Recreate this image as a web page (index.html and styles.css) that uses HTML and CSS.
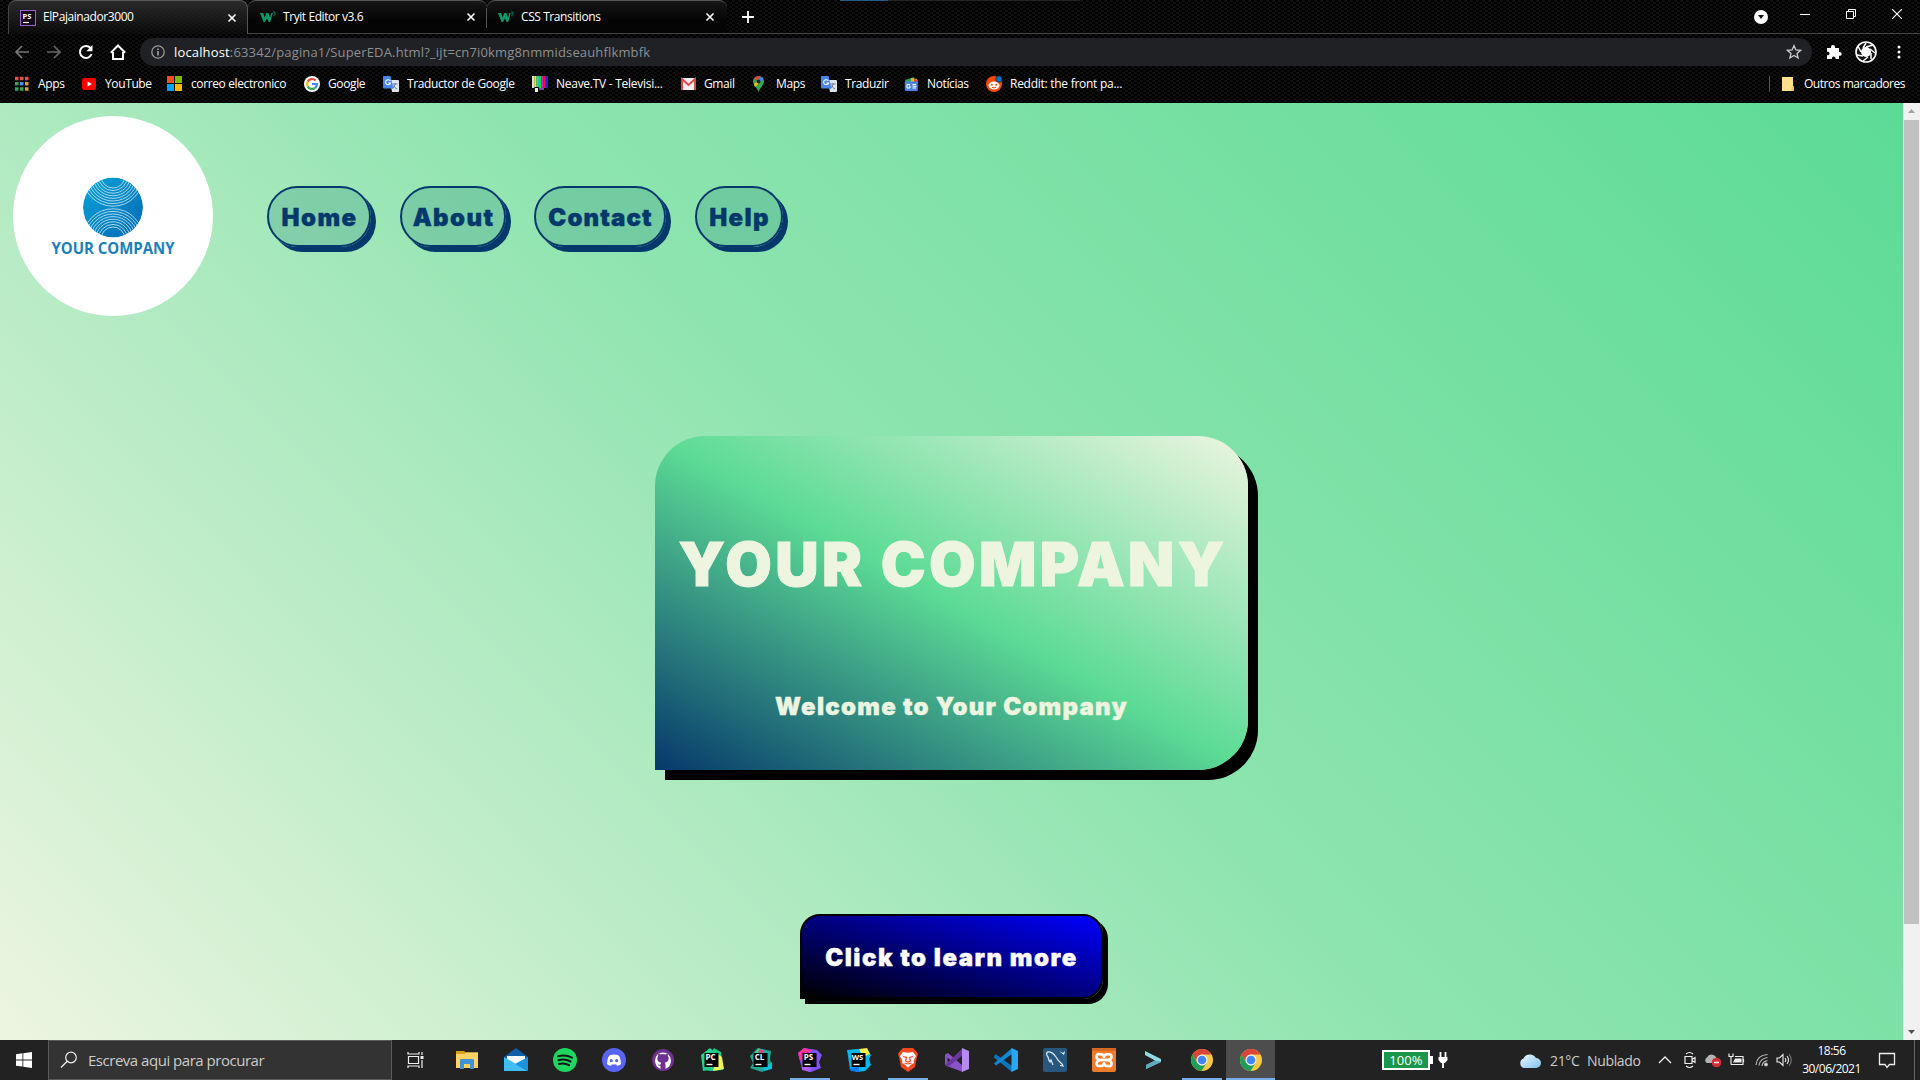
FILE: index.html
```html
<!DOCTYPE html>
<html lang="pt">
<head>
<meta charset="utf-8">
<title>ElPajainador3000</title>
<link rel="stylesheet" href="styles.css">
</head>
<body>
<svg width="0" height="0" class="defs">
  <defs>
    <linearGradient id="emblem" x1="0" y1="0" x2="1" y2="1"><stop offset="0" stop-color="#0aa5d8"/><stop offset="1" stop-color="#0568b4"/></linearGradient>
    <linearGradient id="cloudfill" x1="0" y1="0" x2="1" y2="1"><stop offset="0" stop-color="#eef8ff"/><stop offset="1" stop-color="#7fc0ee"/></linearGradient>
  </defs>
  <symbol id="close" viewBox="0 0 10 10"><path d="M1.500 1.500l7 7M8.500 1.500l-7 7" stroke="#fff" stroke-width="1.600"/></symbol>
  <symbol id="w3" viewBox="0 0 16 16"><path d="M0 4h3l1.700 4.500L6.300 4h2l1.700 4.500L11.300 4h1.500l-2.600 9H8.700L7 9.500 5 13H3.600z" fill="#0a9b6b"/><path d="M13 3h2.300l-1.300 1.700q1.700 0 1.300 1.400-.5 1-2.100.5" fill="none" stroke="#0b7a57" stroke-width=".9"/></symbol>
  <symbol id="trans" viewBox="0 0 16 16"><path d="M7 4h8q1 0 1 1v10q0 1-1 1H9z" fill="#dfe3ea"/><path d="M9.500 8h5M12 7v1.500q-.5 3-3 4M10.500 9.500q1 2.500 3.500 3.500" stroke="#6b7c93" fill="none"/><path d="M1 0h6.500l3 12.500H1q-1 0-1-1V1q0-1 1-1z" fill="#4a86ea"/><path d="M7.300 5A2.500 2.500 0 1 0 7.500 7H5.300" fill="none" stroke="#fff" stroke-width="1.100"/></symbol>
  <symbol id="chrome" viewBox="0 0 48 48"><circle cx="24" cy="24" r="22" fill="#f7c844"/><path d="M5 13A22 22 0 0 1 43 13H24a11 11 0 0 0-9.500 16z" fill="#db4437"/><path d="M5 13l9.500 16.500L24 35l9.500-5.500L23 46A22 22 0 0 1 5 13z" fill="#1e9d58"/><circle cx="24" cy="24" r="11" fill="#f3f3f3"/><circle cx="24" cy="24" r="8.700" fill="#4285f4"/></symbol>
</svg>

<header class="browser">
  <div class="tabs">
    <div class="tab active">
      <svg class="i16" viewBox="0 0 16 16"><rect x=".5" y=".5" width="15" height="15" fill="#130c1c" stroke="#9b5fd0"/><text x="2.500" y="8.500" font-size="7.500" class="jb">PS</text><path d="M3 12.500h6" stroke="#fff" stroke-width="1.200"/></svg>
      <span class="title">ElPajainador3000</span><svg class="x"><use href="#close"/></svg>
    </div>
    <div class="tab second"><svg class="i16"><use href="#w3"/></svg><span class="title">Tryit Editor v3.6</span><svg class="x"><use href="#close"/></svg></div>
    <div class="tab third"><svg class="i16"><use href="#w3"/></svg><span class="title">CSS Transitions</span><svg class="x"><use href="#close"/></svg></div>
    <svg class="plus" viewBox="0 0 12 12"><path d="M6 0v12M0 6h12" stroke="#fff" stroke-width="1.800"/></svg>
    <div class="winctl">
      <svg width="14" height="16" viewBox="0 0 14 16"><ellipse cx="7" cy="9" rx="7" ry="7" fill="#fff"/><path d="M4 7h6l-3 4z" fill="#111"/></svg>
      <svg width="10" height="10" viewBox="0 0 10 10"><path d="M0 5.500h10" stroke="#fff"/></svg>
      <svg width="10" height="10" viewBox="0 0 10 10"><path d="M.5 2.500h7v7h-7zM2.500 2.500v-2h7v7h-2" fill="none" stroke="#fff"/></svg>
      <svg width="10" height="10" viewBox="0 0 10 10"><path d="M0 0l10 10M10 0L0 10" stroke="#fff" stroke-width="1.100"/></svg>
    </div>
  </div>
  <div class="toolbar">
    <svg class="nav" viewBox="0 0 16 16"><path d="M15 8H2M8 2L2 8l6 6" fill="none" stroke="#777" stroke-width="1.700"/></svg>
    <svg class="nav" viewBox="0 0 16 16"><path d="M1 8h13M8 2l6 6-6 6" fill="none" stroke="#666" stroke-width="1.700"/></svg>
    <svg class="nav" viewBox="0 0 16 16"><path d="M13.600 10A6 6 0 1 1 12.500 4" fill="none" stroke="#fff" stroke-width="2"/><path d="M14.500 1v6.200H8.300z" fill="#fff"/></svg>
    <svg class="nav" viewBox="0 0 16 16"><path d="M3 8v7h10V8M.8 8.700L8 1.500l7.200 7.200" fill="none" stroke="#fff" stroke-width="2"/></svg>
    <div class="omnibox">
      <svg width="14" height="14" viewBox="0 0 14 14"><circle cx="7" cy="7" r="6.200" fill="none" stroke="#999" stroke-width="1.300"/><path d="M7 6v4.500M7 3.500V5" stroke="#aaa" stroke-width="1.500"/></svg>
      <span class="url"><b>localhost</b>:63342/pagina1/SuperEDA.html?_ijt=cn7i0kmg8nmmidseauhflkmbfk</span>
      <svg class="star" viewBox="0 0 16 16"><path d="M8 1.600l1.900 4.300 4.700.4-3.600 3.100 1.100 4.600L8 11.500 3.900 14 5 9.400 1.400 6.300l4.700-.4z" fill="none" stroke="#ccc" stroke-width="1.300"/></svg>
    </div>
    <svg class="puzzle" viewBox="0 0 16 16"><path d="M1 4h4V3a2 2 0 0 1 4 0v1h4v4h.8a1.900 1.900 0 0 1 0 3.800H13V15H9.500v-.8a1.800 1.800 0 0 0-3.600 0v.8H1v-3.800h.8a1.700 1.700 0 0 0 0-3.400H1z" fill="#fff"/></svg>
    <svg class="avatar" viewBox="0 0 22 22"><circle cx="11" cy="11" r="10" fill="#111" stroke="#fff" stroke-width="1.600"/><circle cx="11" cy="11" r="5" fill="#fff"/><path d="M11 6l7-2M15 8l5 4M16 12l0 6M13 16l-5 4M8 15l-6-1M6 11L3 5M8 7l3-5" stroke="#fff" stroke-width="1.500"/></svg>
    <svg class="dots" viewBox="0 0 4 16"><circle cx="2" cy="3" r="1.500" fill="#fff"/><circle cx="2" cy="8" r="1.500" fill="#fff"/><circle cx="2" cy="13" r="1.500" fill="#fff"/></svg>
  </div>
  <div class="bookmarks">
    <div class="bm"><svg class="i16" viewBox="0 0 16 16"><path d="M0 2.500h3.500M5 2.500h3.500M10 2.500h3.500" stroke="#e0524a" stroke-width="3.500"/><path d="M0 7.700h3.500" stroke="#38a35c" stroke-width="3.500"/><path d="M5 7.700h3.500" stroke="#4b8ef0" stroke-width="3.500"/><path d="M10 7.700h3.500" stroke="#d9a636" stroke-width="3.500"/><path d="M0 13h3.500M5 13h3.500" stroke="#38a35c" stroke-width="3.500"/><path d="M10 13h3.500" stroke="#d9a636" stroke-width="3.500"/></svg><span>Apps</span></div>
    <div class="bm tight"><svg class="i16" viewBox="0 0 16 16"><rect y="2" width="14" height="12" rx="2.500" fill="#f00"/><path d="M5.500 5.500v5L10 8z" fill="#fff"/></svg><span>YouTube</span></div>
    <div class="bm"><svg class="i16" viewBox="0 0 16 16"><path fill="#f25022" d="M0 0h7v7H0z"/><path fill="#7fba00" d="M8 0h7v7H8z"/><path fill="#00a4ef" d="M0 8h7v7H0z"/><path fill="#ffb900" d="M8 8h7v7H8z"/></svg><span>correo electronico</span></div>
    <div class="bm"><svg class="i16" viewBox="0 0 16 16"><circle cx="8" cy="8" r="8" fill="#fff"/><g fill="none" stroke-width="2.200"><path d="M11.500 4.500A4.900 4.900 0 0 0 3.700 5.500" stroke="#ea4335"/><path d="M3.700 5.500a5 5 0 0 0 0 5" stroke="#fbbc05"/><path d="M3.700 10.500A5 5 0 0 0 11 12" stroke="#34a853"/><path d="M11 12q2-1.500 1.900-4H8" stroke="#4285f4"/></g></svg><span>Google</span></div>
    <div class="bm"><svg class="i16"><use href="#trans"/></svg><span>Traductor de Google</span></div>
    <div class="bm wide"><svg class="i16" viewBox="0 0 16 16"><path fill="#ddd" d="M0 0h2.300v12H0z"/><path fill="#eded19" d="M2.300 0h2.300v11H2.300z"/><path fill="#13dede" d="M4.600 0h2.300v11H4.600z"/><path fill="#17df25" d="M6.900 0h2.300v12H6.900z"/><path fill="#e51be0" d="M9.200 0h2.300v12H9.200z"/><path fill="#ec1835" d="M11.500 0h2.300v12h-2.300z"/><path fill="#1c25e5" d="M13.800 0H16v12h-2.200z"/><path fill="#eee" d="M3 12h3v4H3z"/><path fill="#734bb0" d="M7 12h5v2H7z"/></svg><span>Neave.TV - Televisi...</span></div>
    <div class="bm tight"><svg class="i16" viewBox="0 0 16 16"><path d="M0 2h15v12H0z" fill="#f4eeee"/><path d="M1 14V3l6.500 6L14 3v11" fill="none" stroke="#d54b45" stroke-width="2"/></svg><span>Gmail</span></div>
    <div class="bm tight"><svg class="i16" viewBox="0 0 16 16"><path d="M5.500 0A5.500 5.500 0 0 1 11 5.500Q11 8 8 11.500 6.500 13.500 5.500 16 4.500 13 3 11.500 0 8 0 5.500A5.500 5.500 0 0 1 5.500 0z" fill="#34a853"/><path d="M5.500 0A5.500 5.500 0 0 0 1 2.500l2.500 2L8 .6z" fill="#ea4335"/><path d="M8 .6L3 7l5-2 2.500-2.500z" fill="#4285f4"/><path d="M.8 8.500L5 4l1 3-4 4z" fill="#fbbc04"/><circle cx="5.500" cy="5.500" r="2" fill="#16202c"/></svg><span>Maps</span></div>
    <div class="bm"><svg class="i16"><use href="#trans"/></svg><span>Traduzir</span></div>
    <div class="bm tight"><svg class="i16" viewBox="0 0 16 16"><path d="M1 4l9-3 1 5H1z" fill="#2d9f5b"/><path d="M7 2l6 1v4H7z" fill="#eab429"/><path d="M10 3l4 1v4h-4z" fill="#d9453d"/><rect x=".8" y="5.500" width="13" height="9.500" rx="1" fill="#4b83df"/><path d="M6 8.500H3v3.500h3v-2H5M8.500 8.500h3.500M8.500 10.300h4M8.500 12h3.500" fill="none" stroke="#fff"/></svg><span>Notícias</span></div>
    <div class="bm wide"><svg class="i16" viewBox="0 0 16 16"><circle cx="8" cy="8" r="8" fill="#ff4500"/><ellipse cx="8" cy="9.500" rx="5.500" ry="4" fill="#fff"/><circle cx="5.800" cy="8.700" r="1" fill="#ff4500"/><circle cx="10.200" cy="8.700" r="1" fill="#ff4500"/><path d="M6 11.300q2 1 4 0" stroke="#ff4500" fill="none"/><circle cx="13" cy="3" r="3.200" fill="#0872c4" stroke="#111" stroke-width=".6"/></svg><span>Reddit: the front pa...</span></div>
    <div class="bm others"><svg class="i16" viewBox="0 0 16 16"><path d="M0 1h11v9l1 1v4H0z" fill="#ffe08a"/><path d="M9.500 11l2.500-.5V15H9.500z" fill="#eac45a"/></svg><span>Outros marcadores</span></div>
  </div>
</header>

<div class="viewport">
  <main class="page">
    <div class="top">
      <svg class="logo" viewBox="0 0 200 200">
        <circle cx="100" cy="100" r="100" fill="#fff"/>
        <clipPath id="ball"><circle cx="100" cy="91.500" r="30"/></clipPath>
        <g clip-path="url(#ball)">
          <circle cx="100" cy="91.500" r="30" fill="url(#emblem)"/>
          <g fill="none" stroke="#b9e1f3" stroke-width=".9">
            <circle cx="100" cy="60" r="12"/><circle cx="100" cy="60" r="14.600"/><circle cx="100" cy="60" r="17.200"/><circle cx="100" cy="60" r="19.800"/><circle cx="100" cy="60" r="22.400"/><circle cx="100" cy="60" r="25"/><circle cx="100" cy="60" r="27.600"/><circle cx="100" cy="60" r="30.200"/>
            <circle cx="100" cy="123" r="12"/><circle cx="100" cy="123" r="14.600"/><circle cx="100" cy="123" r="17.200"/><circle cx="100" cy="123" r="19.800"/><circle cx="100" cy="123" r="22.400"/><circle cx="100" cy="123" r="25"/><circle cx="100" cy="123" r="27.600"/><circle cx="100" cy="123" r="30.200"/>
          </g>
        </g>
        <text x="38.500" y="138" textLength="123" lengthAdjust="spacingAndGlyphs" class="logotext">YOUR COMPANY</text>
      </svg>
      <nav class="menu"><a class="m1">Home</a><a class="m2">About</a><a class="m3">Contact</a><a class="m4">Help</a></nav>
    </div>
    <section class="card"><h1>YOUR COMPANY</h1><p>Welcome to Your Company</p></section>
    <button class="cta">Click to learn more</button>
  </main>
  <div class="scrollbar">
    <svg width="17" height="17" viewBox="0 0 17 17"><path d="M5 10h7L8.500 6z" fill="#a3a3a3"/></svg>
    <div class="track"><div class="thumb"></div></div>
    <svg width="17" height="17" viewBox="0 0 17 17"><path d="M5 7h7l-3.500 4z" fill="#505050"/></svg>
  </div>
</div>

<footer class="taskbar">
  <div class="start"><svg width="16" height="16" viewBox="0 0 16 16"><path d="M0 2.200l6.500-.9v6.200H0zM7.300 1.200L16 0v7.500H7.300zM0 8.400h6.500v6.200L0 13.700zM7.300 8.400H16V16l-8.700-1.200z" fill="#fff"/></svg></div>
  <div class="search"><svg width="18" height="18" viewBox="0 0 18 18"><circle cx="11" cy="6.500" r="5.300" fill="none" stroke="#eee" stroke-width="1.200"/><path d="M7.200 10.300L1 16.500" stroke="#eee" stroke-width="1.300"/></svg><span>Escreva aqui para procurar</span></div>
  <div class="app view"><svg width="18" height="18" viewBox="0 0 18 18" fill="none" stroke="#eee" stroke-width="1.200"><path d="M1.500 5.500h10v7h-10zM1 1v2h11V1M1 17v-2h11v2M15 1v3M15 9v8"/><path d="M13.500 6.500h3" stroke-width="3"/></svg></div>
  <div class="app"><svg viewBox="0 0 24 24"><path d="M1 3h8l2 1.500h12V8H1z" fill="#d9a11c"/><path d="M1 6h8l2-1.500h12V20H1z" fill="#fcd364"/><path d="M5 21v-9q0-1 1-1h12q1 0 1 1v9h-4v-5H9v5z" fill="#4092d5"/></svg></div>
  <div class="app"><svg viewBox="0 0 24 24"><path d="M0 9L12 0l12 9-12 8z" fill="#0f5ea8"/><path d="M3 8h18v4l-9 6-9-5z" fill="#f5f8fa"/><path d="M0 9l24 14H0z" fill="#41bdf3"/><path d="M24 9L11 16l13 7z" fill="#1993df"/></svg></div>
  <div class="app"><svg viewBox="0 0 24 24"><circle cx="12" cy="12" r="12" fill="#1ed760"/><path d="M5 8.200q7.500-2.200 14 1.500M5.500 12.200q6.500-1.700 12 1.300M6 16q5.500-1.500 10 1.200" fill="none" stroke="#161616" stroke-width="2" stroke-linecap="round"/></svg></div>
  <div class="app"><svg viewBox="0 0 24 24"><circle cx="12" cy="12" r="12" fill="#5765f2"/><path d="M8.500 7q3.500-1 7 0 3 .500 3.500 9-1.500 1.500-4 1.800l-1-1.500q-2 .5-4 0L9 17.800Q6.500 17.500 5 16 5.500 7.500 8.500 7z" fill="#fff"/><circle cx="9.300" cy="12.700" r="1.600" fill="#5765f2"/><circle cx="14.700" cy="12.700" r="1.600" fill="#5765f2"/></svg></div>
  <div class="app"><svg viewBox="0 0 24 24"><circle cx="12" cy="12" r="11" fill="#6e3191"/><path d="M9.500 20.800Q4 18.500 4 12.500a8 8 0 0 1 16 0q0 6-5.500 8.300v-4q0-1.300-.8-2 4-.6 4-4.500 0-1.400-1-2.500.3-1.200-.1-2.300-1.200 0-2.400.9-2.200-.6-4.400 0-1.200-.9-2.400-.9-.4 1.100-.1 2.300-1 1.100-1 2.500 0 3.900 4 4.500-.6.500-.8 1.600-1.800.8-3-1 .5 2.500 3 2.500z" fill="#fff"/></svg></div>
  <div class="app"><svg viewBox="0 0 24 24"><path d="M1 7l9-7 5 4-3 17-9 2z" fill="#21d789"/><path d="M14 0l7 4 2 18-12 1-8-1 2-8z" fill="#21c98c"/><path d="M18 6l4 3 2 12-11 2z" fill="#edf45a"/><path d="M4.500 5h14v14h-14z" fill="#000"/><text x="5.500" y="11.500" font-size="8" class="jb">PC</text><path d="M6.500 16.500h6" stroke="#fff" stroke-width="1.400"/></svg></div>
  <div class="app"><svg viewBox="0 0 24 24"><path d="M1 8L9 0l13 3-1 8 2 8-10 5L1 20l3-5z" fill="#20a796"/><path d="M9 0l5 3-2 4H4z" fill="#21d789"/><path d="M11 1l4 2-3 3-3-2z" fill="#ee3c7e"/><path d="M14 20l9-6v7l-8 2z" fill="#0ac4dd"/><path d="M4.500 5h14v14h-14z" fill="#000"/><text x="5.700" y="11.500" font-size="8" class="jb">CL</text><path d="M6.500 16.500h6" stroke="#fff" stroke-width="1.400"/></svg></div>
  <div class="app run"><svg viewBox="0 0 24 24"><path d="M0 5l6-5 13 2 5 5-3 7 2 6-10 4-9-3z" fill="#8052f5"/><path d="M0 5l6-5 8 2-9 9-3 2z" fill="#f9329c"/><path d="M4 17l9 3-1 4-8-2z" fill="#b25af5"/><path d="M4.500 5h14v14h-14z" fill="#000"/><text x="5.700" y="11.500" font-size="8" class="jb">PS</text><path d="M6.500 16.500h6" stroke="#fff" stroke-width="1.400"/></svg></div>
  <div class="app"><svg viewBox="0 0 24 24"><path d="M0 2l10-1 10 1 4 5-2 4 2 6-6 6-8 1-7-3z" fill="#07b8ed"/><path d="M12 1l8-1 3 6-7 3z" fill="#f4ed4b"/><path d="M2 20l10-1v5l-8-1z" fill="#087cfa"/><path d="M4.500 5h14v14h-14z" fill="#000"/><text x="4.800" y="11.500" font-size="7.500" class="jb">WS</text><path d="M6.500 16.500h6" stroke="#fff" stroke-width="1.400"/></svg></div>
  <div class="app run"><svg viewBox="0 0 24 24"><path d="M7 0h10l3 3 2 3-1 3-2 10-7 5-7-5L3 9 2 6l2-3z" fill="#f5471e"/><path d="M7 4l5 .8L17 4l3 4-2.500 5 .5 2-3.500 2-2.500 2.800L9.500 17 6 15l.5-2L4 8z" fill="#fff"/><path d="M7 8.500l3.500 1-1 3.500 2.500 1 2.500-1-1-3.500 3.500-1M8.500 15l3.500 1 3.500-1" fill="none" stroke="#f5471e" stroke-width="1.200"/></svg></div>
  <div class="app"><svg viewBox="0 0 24 24"><path d="M0 6.500L3 5l15 13v6L3 18.500l-3-1.500zM2.500 9.500v5L5.500 12z" fill="#8a52c7" fill-rule="evenodd"/><path d="M3 19l-3-2L18 0v7z" fill="#68389f"/><path d="M17 0l7 3v18l-7 3z" fill="#b78af0"/></svg></div>
  <div class="app"><svg viewBox="0 0 24 24"><path d="M0 8l2-1.700L18 18v6L0 9.500z" fill="#0d75ba"/><path d="M0 15.500l2 2L18 6V0z" fill="#1288d4"/><path d="M17.500 0L24 3v18l-6.500 3z" fill="#29a8f2"/></svg></div>
  <div class="app"><svg viewBox="0 0 24 24"><rect width="24" height="24" rx="2" fill="#27577f"/><path d="M4 4q5-1 9 5 2 4 6 7l1 2-3-.5M4 4q-1 3 1 5 1 4 2 5l1-2 2 5" fill="none" stroke="#dfeaf2" stroke-width="1.200"/><path d="M16 3l4 2 2-2-1 4z" fill="#fff"/></svg></div>
  <div class="app"><svg viewBox="0 0 24 24"><rect width="24" height="24" rx="2" fill="#ee7c2b"/><path d="M0 0h24v3H0z" fill="#d6681f"/><path d="M10 12Q4.500 12.500 4.500 9T8 6.300h1q3 0 3 3 0-3 3-3h1q3.500-.3 3.500 2.700T14 12q5.500 0 5.500 3.500T16 18h-1q-3 0-3-3 0 3-3 3H8q-3.500.300-3.500-2.500T10 12z" fill="none" stroke="#fff" stroke-width="2.600" stroke-linejoin="round"/><path d="M9 12h6" stroke="#fff" stroke-width="2.500"/></svg></div>
  <div class="app"><svg viewBox="0 0 24 24"><path d="M4 3l16 8v3L5 21v-4l9-4.500L4 7z" fill="#91dbe5"/><path d="M5 17l9-4.500 6 1L5 21z" fill="#5da9ba"/></svg></div>
  <div class="app run"><svg><use href="#chrome"/></svg></div>
  <div class="app run on"><svg><use href="#chrome"/></svg></div>

  <div class="power"><span class="batt">100%</span><svg width="12" height="18" viewBox="0 0 12 18"><path d="M3.500 1v5M8.500 1v5M6 11v6" stroke="#fff" stroke-width="1.800"/><path d="M1.500 6h9v3L8 12H4L1.500 9z" fill="#fff"/></svg></div>
  <div class="weather"><svg width="23" height="17" viewBox="0 0 23 17"><path d="M6 16a5 5 0 0 1-.5-9.500A7 7 0 0 1 18 6a5 5 0 0 1 0 10z" fill="url(#cloudfill)"/></svg><span class="deg">21°C</span><span class="cond">Nublado</span></div>
  <div class="tray">
    <svg width="14" height="20" viewBox="0 0 14 20"><path d="M1 13l6-6 6 6" fill="none" stroke="#eee" stroke-width="1.300"/></svg>
    <svg width="12" height="20" viewBox="0 0 12 20" fill="none" stroke="#eee" stroke-width="1.200"><path d="M1 6.500h7v7H1zM8 9.500l3-2v5l-3-2M2 4q3.500-3 7 0M2 16q3.500 3 7 0"/></svg>
    <svg width="18" height="20" viewBox="0 0 18 20"><path d="M3 13a3 3 0 0 1 0-5.500A5 5 0 0 1 12 7l2 6z" fill="#b4b4b4"/><circle cx="12.500" cy="12.500" r="4.800" fill="#d32f35"/><path d="M10 12.500h5" stroke="#fff" stroke-width="1.400"/></svg>
    <svg width="17" height="20" viewBox="0 0 17 20"><path d="M7 8.500h6.500v4H5z" fill="#eee"/><path d="M3 14.500h12v-8H7M15.500 9v3M1 3.500v3h4v-3M3 6.500v8" fill="none" stroke="#eee" stroke-width="1.200"/></svg>
    <svg width="13" height="20" viewBox="0 0 13 20" fill="none" stroke="#bbb" stroke-width="1.200"><path d="M1 15Q2 5 12.500 4.500M4 15.500Q5 8.500 12.500 7.500M7 16q.5-4.500 5.500-5.500"/><circle cx="11" cy="14.500" r="1.300" fill="#fff"/></svg>
    <svg width="16" height="20" viewBox="0 0 16 20" fill="none" stroke="#eee" stroke-width="1.100"><path d="M1 8h2.500L7 4.500v11L3.500 12H1zM9 8q1.500 2 0 4M11 6q3 4 0 8"/><path d="M13 4q4.500 6 0 12" stroke="#777"/></svg>
  </div>
  <div class="clock"><span class="time">18:56</span><span class="date">30/06/2021</span></div>
  <svg class="note" viewBox="0 0 18 18"><path d="M1.500 2.500h15v11h-5L9 16.500l-2-3H1.500z" fill="none" stroke="#eee" stroke-width="1.300"/></svg>
  <div class="desk"></div>
</footer>
</body>
</html>
```
FILE: styles.css
```css
* { box-sizing: border-box; }
body { margin: 0; width: 1920px; height: 1080px; overflow: hidden; display: flex; flex-direction: column; font-family: "Open Sans", "Noto Sans", sans-serif; color: #fff; background: #000; }
svg { flex: none; display: block; }
.defs { position: absolute; }
.i16 { width: 16px; height: 16px; }
.jb { font-family: "Open Sans", sans-serif; font-weight: 700; fill: #fff; }

/* browser frame */
.browser { height: 103px; flex: none; background: #050505 repeating-conic-gradient(#000 0 25%, #0e0e0f 0 50%) 0 0 / 6px 4px; }
.tabs { height: 34px; display: flex; align-items: stretch; padding-left: 8px; background: linear-gradient(90deg, transparent 840px, #235a85 840px 888px, #222 888px 1080px, transparent 1080px) 0 0 / 100% 1px no-repeat, linear-gradient(90deg, transparent 248px, #464646 248px) 0 100% / 100% 1px no-repeat; }
.tab { display: flex; align-items: center; font-size: 12px; white-space: nowrap; background: linear-gradient(#161616, #050505 60%); border-top: 1px solid #555; border-bottom: 1px solid #464646; }
.tab .title { margin: -2px 0 0 7px; flex: 1; letter-spacing: -.42px; }
.tab .x { width: 10px; height: 10px; flex: none; }
.tab.active { width: 240px; padding: 0 10px 0 11px; border-right: 1px solid #555; border-left: 1px solid #444; border-bottom: 0; border-radius: 8px 8px 0 0; background: linear-gradient(#2a2a2a, rgba(15,15,15,.5)); }
.tab.second { width: 239px; padding: 0 11px 0 12px; border-radius: 8px 8px 0 0; }
.tab.third { width: 240px; padding: 0 12px 0 11px; position: relative; border-radius: 8px 8px 0 0; }
.tab.third::before { content: ""; position: absolute; left: -1px; top: 7px; height: 20px; width: 1px; background: #555; }
.plus { width: 12px; height: 12px; align-self: center; margin-left: 15px; }
.winctl { flex: 1; display: grid; grid-template-columns: 46px 46px 46px 10px; justify-content: end; padding: 9px 18px 0 0; }
.winctl svg:first-child { margin-top: -1px; }
.toolbar { height: 36px; display: flex; align-items: center; padding-left: 14px; }
.nav { width: 16px; height: 16px; margin-right: 16px; }
.nav:nth-child(4) { margin-right: 14px; }
.omnibox { width: 1672px; height: 28px; border-radius: 14px; background: #202124; display: flex; align-items: center; padding: 0 10px 0 11px; }
.url { flex: 1; margin-left: 9px; font-size: 13px; color: #8d8f92; letter-spacing: .15px; }
.url b { font-weight: 400; color: #fff; }
.star { width: 16px; height: 16px; }
.puzzle { width: 16px; height: 16px; margin-left: 14px; }
.avatar { width: 22px; height: 22px; margin-left: 13px; }
.dots { width: 4px; height: 16px; margin-left: 20px; }
.bookmarks { height: 28px; display: grid; grid-template-columns: 67px 85px 137px 79px 149px 149px 72px 68px 83px 82px 1fr 151px; padding-left: 15px; align-items: center; }
.bm { display: flex; align-items: center; gap: 8px; font-size: 12px; letter-spacing: -.38px; white-space: nowrap; }
.bm span { margin-top: -2px; }
.bm.tight { gap: 7px; }
.bm.wide { letter-spacing: -.27px; }
.bm:nth-child(1) { gap: 7px; }
.bm.others { border-left: 1px solid #555; padding-left: 12px; gap: 6px; letter-spacing: -.47px; }

/* web page */
.viewport { height: 937px; display: flex; flex: none; }
.page { width: 1903px; display: flex; flex-direction: column; align-items: flex-start; background: linear-gradient(45deg, #edf5e1, #8ee4af, #5cdb95); font-family: Inter, "Liberation Sans", sans-serif; font-weight: 900; }
.top { display: flex; padding: 13px 0 0 13px; width: 100%; height: 333px; }
.logo { width: 200px; height: 200px; }
.logotext { font: 700 16px "Open Sans", sans-serif; fill: #1a7fbf; }
.menu { display: flex; margin: 70px 0 0 54px; height: 61px; }
.menu a { border: 2px solid #05386b; border-radius: 31px; background: rgba(55,150,131,.3); box-shadow: 5px 5px 0 #05386b; color: #05386b; font-size: 24px; letter-spacing: 1.4px; padding: 2px 0 0 1px; -webkit-text-stroke: .4px #05386b; display: flex; justify-content: center; align-items: center; white-space: nowrap; }
.m1 { width: 104px; margin-right: 29px; }
.m2 { width: 106px; margin-right: 28px; }
.menu .m3 { width: 132px; margin-right: 29px; letter-spacing: 1.1px; }
.m4 { width: 88px; }
.card { width: 593px; height: 334px; margin-left: 655px; border-radius: 50px 50px 50px 0; box-shadow: 10px 10px 0 #000; background: linear-gradient(to top right, #05386b, #5cdb95, #edf5e1); color: #edf5e1; text-align: center; padding-top: 92px; }
.card h1 { margin: 0; padding-left: 3px; font-size: 60px; line-height: 73px; font-weight: 900; letter-spacing: 3.4px; -webkit-text-stroke: 1px #edf5e1; white-space: nowrap; }
.card p { margin: 91px 0 0; font-size: 24px; line-height: 30px; letter-spacing: 1.25px; -webkit-text-stroke: .4px #edf5e1; white-space: nowrap; }
.cta { margin: 144px 0 0 800px; padding: 2px 0 0; width: 303px; height: 85px; border: 2px solid #000; border-radius: 20px 20px 20px 0; background: linear-gradient(to top right, #000, #00f); box-shadow: 5px 5px 0 #000; color: #fff; font: 900 24px Inter, sans-serif; letter-spacing: 1.5px; -webkit-text-stroke: .4px #fff; white-space: nowrap; }
.scrollbar { width: 17px; background: #f1f1f1; }
.track { height: 903px; }
.thumb { width: 15px; height: 804px; margin: 0 1px; background: #c1c1c1; }

/* taskbar */
.taskbar { height: 40px; flex: none; display: flex; align-items: center; background: #222; }
.start { width: 48px; padding-left: 16px; }
.search { width: 344px; height: 40px; border: 1px solid #5a5a5a; background: #333; display: flex; align-items: center; gap: 10px; padding-left: 11px; font-size: 15px; color: #ccc; letter-spacing: -.48px; white-space: nowrap; }
.app { width: 49px; height: 40px; display: flex; align-items: center; justify-content: center; border-bottom: 2px solid transparent; border-top: 2px solid transparent; }
.app svg { width: 24px; height: 24px; }
.app.view { width: 50px; padding-right: 2px; }
.app.view svg { width: 18px; height: 18px; }
.run { background: linear-gradient(#76b0e6, #76b0e6) center bottom / 40px 2px no-repeat border-box; }
.on { background-color: #4d4d4d; background-size: 49px 2px; }
.power { display: flex; align-items: center; gap: 7px; margin-left: 107px; width: 136px; }
.batt { width: 48px; height: 20px; border: 2px solid #fff; background: #1b974b; font-size: 13px; line-height: 16px; text-align: center; position: relative; letter-spacing: .1px; }
.batt::after { content: ""; position: absolute; right: -5px; top: 4px; width: 3px; height: 8px; background: #fff; }
.weather { display: flex; align-items: center; width: 140px; font-size: 14px; color: #ccc; white-space: nowrap; letter-spacing: -.35px; }
.deg { margin-left: 9px; width: 37px; }
.tray { display: grid; grid-template-columns: 26px 20px 24px 27px 21px 16px; width: 141px; }
.clock { width: 65px; display: flex; flex-direction: column; align-items: center; font-size: 12px; line-height: 18px; letter-spacing: -.5px; }
.note { width: 18px; height: 18px; margin-left: 14px; }
.desk { width: 1px; height: 40px; background: #666; margin-left: 18px; }
```
